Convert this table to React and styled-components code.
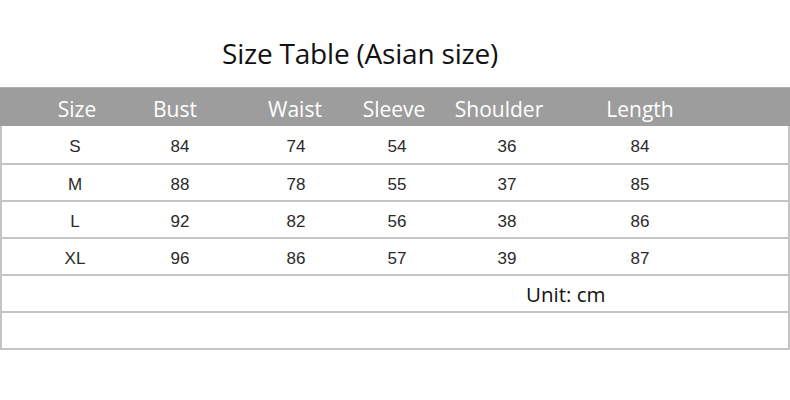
import React from "react";
import styled, { createGlobalStyle } from "styled-components";

const Global = createGlobalStyle`
  html, body { margin: 0; padding: 0; background: #fff; }
  body { width: 790px; height: 400px; overflow: hidden; }
`;

const Page = styled.div`
  width: 790px;
  height: 400px;
  background: #fff;
  display: flex;
  flex-direction: column;
`;

const Title = styled.h1`
  margin: 0;
  height: 87px;
  box-sizing: border-box;
  padding: 34px 0 0 222px;
  font-family: "Open Sans", "Noto Sans", sans-serif;
  font-weight: 400;
  font-size: 28px;
  line-height: 38px;
  color: #111;
  letter-spacing: -0.2px;
`;

const Table = styled.div`
  width: 790px;
  box-sizing: border-box;
  border-left: 2px solid #c4c4c4;
  border-right: 2px solid #c4c4c4;
  border-bottom: 2px solid #c4c4c4;
`;

const HeaderRow = styled.div`
  display: flex;
  height: 39px;
  margin: 0 -2px;
  padding-left: ${(p) => p.$pad}px;
  background: #9d9d9d;
  border-top: 1px solid #b0b0b0;
  box-sizing: border-box;
  align-items: center;
`;

const Row = styled.div`
  display: flex;
  height: 37px;
  padding-left: ${(p) => p.$pad}px;
  align-items: center;
  box-sizing: border-box;
  border-top: ${(p) => (p.$first ? "none" : "2px solid #c4c4c4")};
`;

const HeadCell = styled.div`
  width: ${(p) => p.$w}px;
  flex: none;
  display: flex;
  justify-content: center;
  white-space: nowrap;
  font-family: "Open Sans", "Noto Sans", sans-serif;
  font-size: 21px;
  color: #fff;
  padding-top: 4px;
`;

const Cell = styled.div`
  width: ${(p) => p.$w}px;
  flex: none;
  display: flex;
  justify-content: center;
  white-space: nowrap;
  font-family: "Liberation Sans", Arial, sans-serif;
  font-size: 17px;
  color: #2a2a2a;
  padding-top: 4px;
`;

const Note = styled.div`
  padding-left: 524px;
  padding-top: 1px;
  font-family: "Open Sans", "Noto Sans", sans-serif;
  font-size: 20.5px;
  color: #111;
`;

const headW = [90, 106, 134, 64, 146, 136];
const bodyW = [90, 120, 112, 90, 130, 136];
const heads = ["Size", "Bust", "Waist", "Sleeve", "Shoulder", "Length"];
const rows = [
  ["S", 84, 74, 54, 36, 84],
  ["M", 88, 78, 55, 37, 85],
  ["L", 92, 82, 56, 38, 86],
  ["XL", 96, 86, 57, 39, 87],
];

export default function App() {
  return (
    <Page>
      <Global />
      <Title>Size Table (Asian size)</Title>
      <Table>
        <HeaderRow $pad={32}>
          {heads.map((h, i) => (
            <HeadCell key={h} $w={headW[i]}>{h}</HeadCell>
          ))}
        </HeaderRow>
        {rows.map((r, ri) => (
          <Row key={r[0]} $pad={28} $first={ri === 0}>
            {r.map((v, i) => (
              <Cell key={i} $w={bodyW[i]}>{v}</Cell>
            ))}
          </Row>
        ))}
        <Row $pad={0}>
          <Note>Unit: cm</Note>
        </Row>
        <Row $pad={0} />
      </Table>
    </Page>
  );
}
